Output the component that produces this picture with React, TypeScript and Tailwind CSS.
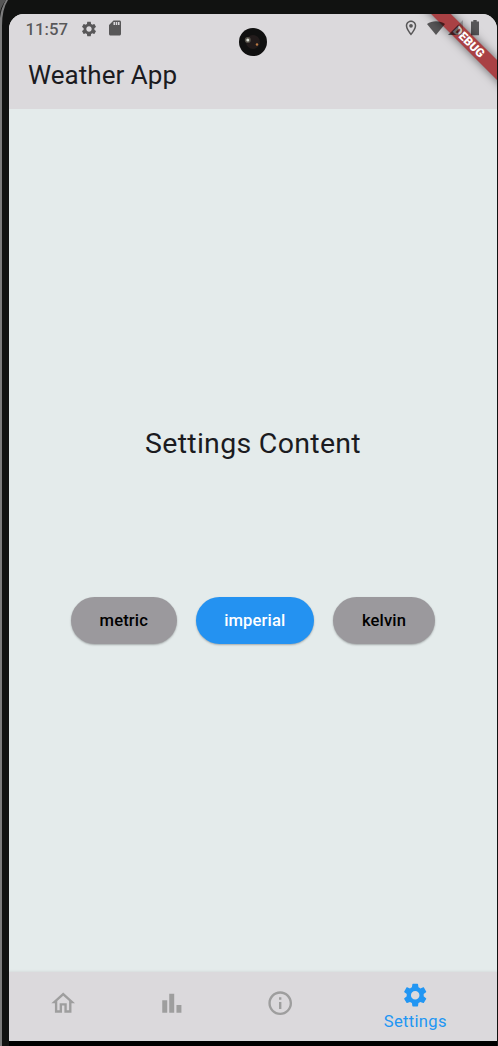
import type { ReactNode } from "react";

const GEAR =
  "M19.14 12.94c.04-.3.06-.61.06-.94 0-.32-.02-.64-.07-.94l2.03-1.58c.18-.14.23-.41.12-.61l-1.92-3.32c-.12-.22-.37-.29-.59-.22l-2.39.96c-.5-.38-1.03-.7-1.62-.94l-.36-2.54c-.04-.24-.24-.41-.48-.41h-3.84c-.24 0-.43.17-.47.41l-.36 2.54c-.59.24-1.13.57-1.62.94l-2.39-.96c-.22-.08-.47 0-.59.22L2.74 8.87c-.12.21-.08.47.12.61l2.03 1.58c-.05.3-.09.63-.09.94s.02.64.07.94l-2.03 1.58c-.18.14-.23.41-.12.61l1.92 3.32c.12.22.37.29.59.22l2.39-.96c.5.38 1.03.7 1.62.94l.36 2.54c.05.24.24.41.48.41h3.84c.24 0 .44-.17.47-.41l.36-2.54c.59-.24 1.13-.56 1.62-.94l2.39.96c.22.08.47 0 .59-.22l1.92-3.32c.12-.22.07-.47-.12-.61l-2.01-1.58zM12 15.6c-1.98 0-3.6-1.62-3.6-3.6s1.62-3.6 3.6-3.6 3.6 1.62 3.6 3.6-1.62 3.6-3.6 3.6z";
const HOME = "M12 5.69l5 4.5V18h-2v-6H9v6H7v-7.81l5-4.5M12 3L2 12h3v8h6v-6h2v6h6v-8h3L12 3z";
const BARS = "M3.6 9.5h4.2V20H3.6zM15.6 13.5h4.2V20h-4.2zM9.5 4h4.2v16H9.5z";
const INFO =
  "M11 7h2v2h-2zM11 11h2v6h-2zM12 2C6.48 2 2 6.48 2 12s4.48 10 10 10 10-4.48 10-10S17.52 2 12 2zm0 18c-4.41 0-8-3.59-8-8s3.59-8 8-8 8 3.59 8 8-3.59 8-8 8z";
const SD = "M18 2h-8L4 8v12c0 1.1.9 2 2 2h12c1.1 0 2-.9 2-2V4c0-1.1-.9-2-2-2zm-6 6h-2V4h2v4zm3 0h-2V4h2v4zm3 0h-2V4h2v4z";
const PIN =
  "M12 2C8.13 2 5 5.13 5 9c0 5.25 7 13 7 13s7-7.75 7-13c0-3.87-3.13-7-7-7zM7 9c0-2.76 2.24-5 5-5s5 2.24 5 5c0 2.88-2.88 7.19-5 9.88C9.92 16.21 7 11.85 7 9zM12 6.5a2.5 2.5 0 1 0 0 5 2.5 2.5 0 0 0 0-5z";

function Icon({ d, className }: { d: string; className: string }) {
  return (
    <svg viewBox="0 0 24 24" className={className} fill="currentColor">
      <path d={d} />
    </svg>
  );
}

function UnitButton({ className, children }: { className: string; children: ReactNode }) {
  return (
    <button
      className={`h-[47.5px] rounded-full pt-[2px] text-[16.6px] font-medium tracking-[0.12px] shadow-[0_1px_2px_rgba(0,0,0,0.28)] ${className}`}
    >
      {children}
    </button>
  );
}

function StatusBar() {
  return (
    <div className="absolute inset-x-0 top-0 z-20 h-7 text-black/60">
      <span className="absolute left-[16.5px] top-[5px] text-[16.8px] font-medium leading-5">11:57</span>
      <Icon d={GEAR} className="absolute left-[71px] top-[5.5px] size-[18px]" />
      <Icon d={SD} className="absolute left-[97px] top-[5px] size-[18px]" />
      <Icon d={PIN} className="absolute left-[393px] top-[5px] size-[18px]" />
      <svg className="absolute left-[417px] top-[6px] h-4 w-5" viewBox="0 0 20 16" fill="currentColor">
        <path d="M10 15 L1 4 C6 .3 14 .3 19 4 Z" />
      </svg>
      <svg className="absolute left-[439px] top-[6px] h-4 w-4" viewBox="0 0 16 16" fill="currentColor">
        <path d="M0 15 L10.5 4.5 V15 Z" />
        <path d="M10.5 4.5 L15 0 V15 H10.5 Z" opacity=".35" />
      </svg>
      <svg className="absolute left-[462px] top-[6px] h-4 w-2" viewBox="0 0 8 16" fill="currentColor">
        <path d="M2.3 0 H5.7 V1.6 H8 V15.3 H0 V1.6 H2.3 Z" />
      </svg>
    </div>
  );
}

export default function App() {
  return (
    <div className="relative h-[1046px] w-[498px] overflow-hidden bg-black font-['Roboto',sans-serif]">
      <svg className="absolute inset-0 h-[1046px] w-[498px]" viewBox="0 0 498 1046">
        <rect width="498" height="1046" fill="#111211" />
        <path d="M0 0 H6 Q0 8 0 14 Z" fill="#555" />
        <path d="M0 1046 V18 Q1 8 6 0 H8 Q2 9 2 26 V1046 Z" fill="#7c7c7c" />
        <rect x="9" y="1041" width="488" height="5" fill="#000" />
      </svg>
      <div className="relative ml-[9px] flex h-[1041px] w-[488px] flex-col pt-[14px]">
        <div className="relative flex min-h-0 flex-1 flex-col overflow-hidden rounded-t-[15px] bg-[#e4ebeb]">
          <StatusBar />
          <header className="flex h-[95px] shrink-0 items-end bg-[#dbd9dc] pb-[18px] pl-[19px]">
            <h1 className="text-[26px] leading-[32px] tracking-[0.04px] text-[#1b1b1f]">Weather App</h1>
          </header>
          <div className="absolute left-[230px] top-[14px] flex size-7 rounded-full bg-[#101010]">
            <svg viewBox="0 0 28 28" className="size-7">
              <circle cx="14" cy="14" r="7" fill="#221b1b" />
              <circle cx="8.8" cy="12" r="3" fill="#555149" />
              <circle cx="8.8" cy="12" r="1.5" fill="#d9ddd4" />
              <circle cx="18" cy="16.5" r="1.2" fill="#bd7b43" />
            </svg>
          </div>
          <div className="absolute left-[400px] top-[21px] z-10 flex h-[14px] w-[120px] rotate-45 items-center justify-center bg-[#a94144] shadow-[0_0_10px_rgba(0,0,0,0.55)]">
            <span className="text-[12px] font-black leading-[14px] text-white">DEBUG</span>
          </div>
          <main className="flex flex-1 flex-col items-center pt-[315px]">
            <h2 className="text-[28.5px] leading-10 tracking-[0.3px] text-[#1b1b1f]">Settings Content</h2>
            <div className="mt-[132.5px] flex gap-[19px]">
              <UnitButton className="w-[105.5px] bg-[#9b999d] text-black">metric</UnitButton>
              <UnitButton className="w-[118.5px] bg-[#2492f1] text-white">imperial</UnitButton>
              <UnitButton className="w-[102px] bg-[#9b999d] text-black">kelvin</UnitButton>
            </div>
          </main>
          <nav className="flex h-[69.5px] shrink-0 items-center bg-[#dbd9dc] text-[#9e9e9e] shadow-[0_-1px_2px_rgba(0,0,0,0.06)]">
            <div className="flex w-[108.5px] justify-center pb-[6px]">
              <Icon d={HOME} className="size-[28.4px]" />
            </div>
            <div className="flex w-[108.5px] justify-center pb-[6px]">
              <Icon d={BARS} className="size-[28.4px]" />
            </div>
            <div className="flex w-[108.5px] justify-center pb-[6px]">
              <Icon d={INFO} className="size-[28.4px]" />
            </div>
            <div className="flex flex-1 flex-col items-center pr-px text-[#2196f3]">
              <Icon d={GEAR} className="size-[28.4px]" />
              <span className="mt-[3px] text-[16.6px] leading-5 tracking-[0.3px]">Settings</span>
            </div>
          </nav>
        </div>
      </div>
    </div>
  );
}
